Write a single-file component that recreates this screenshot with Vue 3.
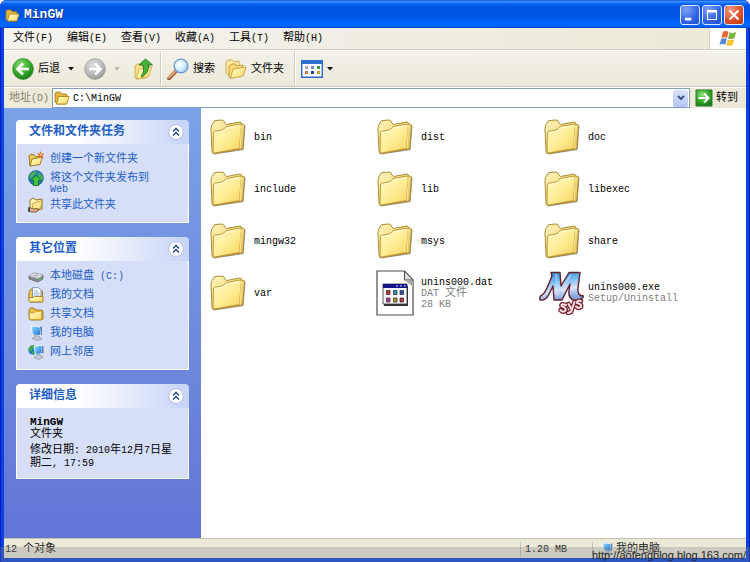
<script setup>
import { h } from 'vue'

// Wraps half-width runs so that they sit at about half the advance of a Chinese character.
const Mixed = (props) =>
  h('span', { class: 'mixed' }, props.t.split(/([\x20-\x7e]+)/).filter(Boolean).map((part) =>
    /^[\x20-\x7e]+$/.test(part) ? h('span', { class: 'lat' }, part) : part))
Mixed.props = ['t']

const menus = ['文件(F)', '编辑(E)', '查看(V)', '收藏(A)', '工具(T)', '帮助(H)']
const tasks = [
  { icon: 'new', lines: ['创建一个新文件夹'] },
  { icon: 'web', lines: ['将这个文件夹发布到', 'Web'] },
  { icon: 'share', lines: ['共享此文件夹'] },
]
const places = [
  { icon: 'disk', lines: ['本地磁盘 (C:)'] },
  { icon: 'docs', lines: ['我的文档'] },
  { icon: 'folder', lines: ['共享文档'] },
  { icon: 'pc', lines: ['我的电脑'] },
  { icon: 'net', lines: ['网上邻居'] },
]
const panels = [
  { title: '文件和文件夹任务', links: tasks },
  { title: '其它位置', links: places },
  { title: '详细信息', links: null },
]
const files = [
  ...['bin', 'dist', 'doc', 'include', 'lib', 'libexec', 'mingw32', 'msys', 'share', 'var']
    .map((name) => ({ name, icon: 'bigfolder', info: [] })),
  { name: 'unins000.dat', icon: 'dat', info: ['DAT 文件', '28 KB'] },
  { name: 'unins000.exe', icon: 'exe', info: ['Setup/Uninstall'] },
]
</script>

<template>
  <div class="window">
    <svg class="defs" width="0" height="0" aria-hidden="true">
      <defs>
        <linearGradient id="gFront" x1="0" y1="0" x2="1" y2="1">
          <stop offset="0" stop-color="#fffac4" /><stop offset=".5" stop-color="#ffee98" /><stop offset="1" stop-color="#f8d25c" />
        </linearGradient>
        <linearGradient id="gBack" x1="0" y1="0" x2="1" y2="1">
          <stop offset="0" stop-color="#fff6bd" /><stop offset="1" stop-color="#e6bd4a" />
        </linearGradient>
        <radialGradient id="gGreen" cx=".4" cy=".3" r=".7">
          <stop offset="0" stop-color="#8fe07c" /><stop offset=".6" stop-color="#35ab2c" /><stop offset="1" stop-color="#1b7d1a" />
        </radialGradient>
        <radialGradient id="gGrey" cx=".4" cy=".3" r=".7">
          <stop offset="0" stop-color="#dedede" /><stop offset=".7" stop-color="#b5b5b3" /><stop offset="1" stop-color="#999" />
        </radialGradient>
        <radialGradient id="gLens" cx=".4" cy=".4" r=".6">
          <stop offset="0" stop-color="#fff" /><stop offset=".6" stop-color="#d3edfd" /><stop offset="1" stop-color="#9dcdf5" />
        </radialGradient>
        <linearGradient id="gScreen" x1="0" y1="0" x2="1" y2="1">
          <stop offset="0" stop-color="#a8e4ff" /><stop offset=".5" stop-color="#4fa8f0" /><stop offset="1" stop-color="#1e6cd0" />
        </linearGradient>
        <linearGradient id="gM" x1="0" y1="0" x2=".25" y2="1">
          <stop offset="0" stop-color="#2f7fd2" /><stop offset=".35" stop-color="#6cb6ef" /><stop offset=".7" stop-color="#dfe6fa" /><stop offset="1" stop-color="#7fa3dc" />
        </linearGradient>
        <symbol id="i-folder" viewBox="0 0 16 16">
          <path d="M1 5Q1 2 3 2H6L8 4H13Q15 4 15 6V13L13 14H3Q1 14 1 12Z" fill="#e9bd45" stroke="#9a7417" stroke-width=".9" />
          <path d="M1.5 7H6L8 5.500H13.500V13.500H3Q1.500 13.500 1.500 12Z" fill="url(#gFront)" stroke="#bd9226" stroke-width=".6" />
        </symbol>
        <symbol id="i-open" viewBox="0 0 16 14">
          <path d="M1 3Q1 1 3 1H6L8 3H12Q13 3 13 5V6L12 13H3L1 11Z" fill="#e6b63e" stroke="#a87d18" stroke-width=".9" />
          <path d="M4.500 5.500H15.200L12.700 13H2.500Z" fill="url(#gFront)" stroke="#ad8119" stroke-width=".9" />
        </symbol>
        <symbol id="i-new" viewBox="0 0 16 16">
          <path d="M1 5L3 3L6 4L8 6L12 5L12 13L2 15Z" fill="#f3cb5d" stroke="#8e6a18" stroke-width=".9" />
          <path d="M4 8L14.500 6L12 13.500L2 15Z" fill="url(#gFront)" stroke="#9e741a" stroke-width=".9" />
          <path d="M12.500 0L13.500 2.500L16 2.500L14.500 4.500L15.500 7L12.500 5.500L10 7L10.800 4.400L9 2.500L11.500 2.500Z" fill="#e9652d" />
          <circle cx="12.700" cy="3.600" r="1.200" fill="#ffd176" />
        </symbol>
        <symbol id="i-web" viewBox="0 0 16 16">
          <circle cx="8" cy="8" r="7.300" fill="#277ac5" stroke="#165586" stroke-width=".8" />
          <path d="M2 5Q4 1 8 1.500L9 3L6 5L4 8L1.500 8ZM11 2L15 7L14 11L11 9L10 6Z" fill="#48b153" />
          <path d="M8 5L13 10.500H10.500V15.500H5.500V10.500H3Z" fill="#3fc43d" stroke="#126a20" stroke-width=".8" />
        </symbol>
        <symbol id="i-share" viewBox="0 0 16 16">
          <path d="M2 3L5 1L8 3L14 2V12L4 14L2 12Z" fill="url(#gFront)" stroke="#896615" stroke-width=".9" />
          <path d="M5 6L14.500 4L12.500 11L4 13Z" fill="#ffe691" stroke="#ac8223" stroke-width=".6" />
          <path d="M0 11H3L5 12L9 11.500L11 13L8 15H3L0 14Z" fill="#e7b288" stroke="#62442f" stroke-width=".8" />
          <path d="M0 10.500H2V15H0Z" fill="#454a54" />
        </symbol>
        <symbol id="i-disk" viewBox="0 0 16 16">
          <path d="M1 8L6 5L15 7V11L10 14L1 11Z" fill="#85888d" stroke="#5e6064" stroke-width=".7" />
          <path d="M1 8L6 5L15 7L10 10.500Z" fill="#dedfe2" />
          <path d="M4 7.700L8 6.500L11 7.500L9 8.800Z" fill="#afb2b8" />
          <path d="M11.500 11.700L14 10.200" stroke="#39d33b" stroke-width="1.300" />
        </symbol>
        <symbol id="i-docs" viewBox="0 0 16 16">
          <path d="M1 5L3 2H6L8 4L14.500 4.500V15H2L1 14Z" fill="#f1c85a" stroke="#99731c" stroke-width=".9" />
          <path d="M4.500 .700H10.500L13 3V12H4.500Z" fill="#fff" stroke="#617ba7" stroke-width=".8" />
          <path d="M6 4H10M6 6H11.500M6 8H11.500" stroke="#659bd2" stroke-width=".8" />
          <path d="M1 10.500H5L6.500 9.500H15V14.500L14 15H2L1 14Z" fill="url(#gFront)" stroke="#99731c" stroke-width=".8" />
        </symbol>
        <symbol id="i-pc" viewBox="0 0 16 16">
          <path d="M3 .700L12 2L13 10.500L4.500 10Z" fill="url(#gScreen)" stroke="#eff5fb" stroke-width="1" />
          <path d="M12 2L14 1.500V10L13 10.500Z" fill="#66809f" />
          <path d="M6.500 10.500L11 11V12L14 14L9 15.500L4 13.500L7 12Z" fill="#c4cad3" stroke="#7b8796" stroke-width=".6" />
        </symbol>
        <symbol id="i-net" viewBox="0 0 16 16">
          <circle cx="5" cy="6" r="4.700" fill="#287bc8" />
          <path d="M1 4Q3 1 6 1.500L7 4L4 5L3 8L.500 7ZM4 8L7 7V10L5 10.500Z" fill="#42aa4b" />
          <path d="M6 2L14 1.500V9.500L7.500 10.500Z" fill="url(#gScreen)" stroke="#edf3fb" stroke-width=".9" />
          <path d="M14 1.500L15.500 2.500V9L14 9.500Z" fill="#637c9c" />
          <path d="M9 10.500L12 10V11.500L15 13L11 15.500L6 13.500L9 12Z" fill="#c7cdd7" stroke="#788492" stroke-width=".6" />
        </symbol>
        <symbol id="i-bigfolder" viewBox="0 0 36 36">
          <path d="M34.500 6L35.500 7L33.500 31L4 35.500L3 34.500L32.500 30Z" fill="#77756a" opacity=".8" />
          <path d="M1 10Q1 6 3 4Q3.500 1.500 6 1.500L12 1Q14 1 15 4L16.500 5.500L30 3Q31.500 3 31.500 5L34 5.500Q34.700 6 34.500 8L32.700 30L3.500 34.500Q2 34.500 2 32Z" fill="url(#gBack)" stroke="#a98b35" stroke-width="1" />
          <path d="M3.500 13Q4 12 6 12L12 11Q14 10.500 15 8.500Q16 7.500 18 7.200L30 5Q31.500 5 31.300 7L29.500 29.500L4.500 34Q3 34 3 32Z" fill="url(#gFront)" stroke="#b9912e" stroke-width=".9" />
          <path d="M4.500 14L13 12Q15.500 11 16.500 9L30 6.500" fill="none" stroke="#fffde2" stroke-width=".9" />
          <path d="M31.500 6.500L30 29.500" fill="none" stroke="#fff1a3" stroke-width=".9" />
        </symbol>
        <symbol id="i-dat" viewBox="0 0 38 46">
          <path d="M1 1H28.500L37 10V45H1Z" fill="#fff" stroke="#4c4c4c" stroke-width="1.200" />
          <path d="M28.500 1V10H37Z" fill="#dcdcdc" stroke="#4c4c4c" stroke-width="1" />
          <path d="M29 10.500L37 11V17Z" fill="#aaa" />
          <path d="M8 16H32V36H8Z" fill="#333" />
          <path d="M7 14H31V34H7Z" fill="#f5f5f8" stroke="#333" stroke-width=".8" />
          <path d="M7 14H31V18H7Z" fill="#101389" />
          <path d="M20 16H22M24 16H26M28 16H30" stroke="#8f98cc" stroke-width="1.400" />
          <g stroke="#222" stroke-width=".7">
            <path d="M10.500 20.500H14V24.500H10.500Z" fill="#cc2e2e" /><path d="M17.500 20.500H21V24.500H17.500Z" fill="#2597b6" /><path d="M24 20.500H27.500V24.500H24Z" fill="#3154bd" />
            <path d="M10.500 28H14V32H10.500Z" fill="#c935a1" /><path d="M17.500 28H21V32H17.500Z" fill="#b49c25" /><path d="M24 28H27.500V32H24Z" fill="#c83434" />
          </g>
        </symbol>
        <symbol id="i-exe" viewBox="0 0 46 44">
          <path d="M12 1.500H21L22 15L30 1.500H41L39 17Q38 25 44.500 25Q43 30 36 29.500Q29 28 30 20L31 13L23 29H15L14 15L10 23Q7 30 1 29Q0 25 3 24Q6 22 8 17L13 5Z" fill="url(#gM)" stroke="#64202b" stroke-width="1.400" stroke-linejoin="round" />
          <path d="M17 3L19 23L32 4" fill="none" stroke="#bfdffa" stroke-width="1.400" opacity=".7" />
          <g fill="none" stroke-linecap="round" stroke-linejoin="round">
            <g stroke="#77202d" stroke-width="4.600">
              <path d="M27 34Q22 32 22.500 35Q28 37 26.500 39.500Q24 42 21.500 39" /><path d="M29.500 33L32 37.500M35.500 31L32 41L29 42" /><path d="M42 30Q37.500 29 38 32Q43 33 42 36Q39.500 38 37 35.500" />
            </g>
            <g stroke="#fce2e6" stroke-width="2">
              <path d="M27 34Q22 32 22.500 35Q28 37 26.500 39.500Q24 42 21.500 39" /><path d="M29.500 33L32 37.500M35.500 31L32 41L29 42" /><path d="M42 30Q37.500 29 38 32Q43 33 42 36Q39.500 38 37 35.500" />
            </g>
          </g>
        </symbol>
      </defs>
    </svg>

    <header class="titlebar">
      <svg class="ic-title" viewBox="0 0 16 14"><use href="#i-open" /></svg>
      <h1>MinGW</h1>
      <div class="winbtns">
        <button type="button" aria-label="最小化"><svg viewBox="0 0 20 20"><path d="M4.500 13H11.500V16H4.500Z" fill="#fff" /></svg></button>
        <button type="button" aria-label="最大化"><svg viewBox="0 0 20 20"><path d="M5 5.500H15V15H5Z" fill="none" stroke="#fff" stroke-width="1.200" /><path d="M4.400 4.500H15.600V7.300H4.400Z" fill="#fff" /></svg></button>
        <button type="button" class="close" aria-label="关闭"><svg viewBox="0 0 20 20"><path d="M5 5L15 15M15 5L5 15" stroke="#fff" stroke-width="2.200" /></svg></button>
      </div>
    </header>

    <div class="client">
      <nav class="menubar">
        <button v-for="m in menus" :key="m" type="button"><Mixed :t="m" /></button>
        <div class="flag">
          <svg viewBox="0 0 20 18">
            <path d="M4 2Q7 0 10 2L8.500 8.500Q5.500 7 2.500 8.500Z" fill="#e8643a" />
            <path d="M11 2.500Q14 4 18 2L16.500 8.500Q13 10.500 9.500 9Z" fill="#7eb844" />
            <path d="M2.200 9.500Q5 8 8.200 9.500L6.700 15.500Q4 14 .500 15.500Z" fill="#5487d6" />
            <path d="M9.200 10Q12.500 11.500 16.200 9.700L14.500 16Q11 18 7.700 16.200Z" fill="#f6c638" />
          </svg>
        </div>
      </nav>

      <div class="toolbar">
        <button type="button" class="tool back">
          <svg class="ic22" viewBox="0 0 22 22"><circle cx="11" cy="11" r="10.400" fill="url(#gGreen)" stroke="#3d8f38" stroke-width=".8" /><path d="M11 5.500L5.500 11L11 16.500M6 11H17" fill="none" stroke="#fff" stroke-width="2.600" /></svg>
          <span>后退</span>
        </button>
        <button type="button" class="drop" aria-label="后退列表"><svg viewBox="0 0 6 4"><path d="M0 0H6L3 3.500Z" fill="#111" /></svg></button>
        <button type="button" class="tool forward" aria-label="前进">
          <svg class="ic22" viewBox="0 0 22 22"><circle cx="11" cy="11" r="10.400" fill="url(#gGrey)" stroke="#a5a5a3" stroke-width=".8" /><path d="M11 5.500L16.500 11L11 16.500M16 11H5" fill="none" stroke="#fff" stroke-width="2.600" /></svg>
        </button>
        <button type="button" class="drop" aria-label="前进列表"><svg viewBox="0 0 6 4"><path d="M0 0H6L3 3.500Z" fill="#bbb9ae" /></svg></button>
        <button type="button" class="tool up" aria-label="向上">
          <svg class="ic22" viewBox="0 0 22 22">
            <path d="M3 8L5 6H8L10 8L17 7V17L14 20L4 21L3 19Z" fill="#f9e28c" stroke="#c9a444" stroke-width=".9" />
            <path d="M7 11L20 9L16 19L4 21Z" fill="url(#gFront)" stroke="#cba448" stroke-width=".8" />
            <path d="M9 18Q13 14 11 7H7L13.500 1L20.500 7H16.500Q17.500 14 10 19Z" fill="#45b53a" stroke="#20741d" stroke-width=".9" />
          </svg>
        </button>
        <i class="sep"></i>
        <button type="button" class="tool">
          <svg class="ic22" viewBox="0 0 22 22">
            <path d="M9 13L2 20.500" stroke="#8b5839" stroke-width="3.600" stroke-linecap="round" /><path d="M8.500 13L2 19.500" stroke="#e9a26a" stroke-width="2" stroke-linecap="round" />
            <circle cx="14" cy="8" r="6.900" fill="url(#gLens)" stroke="#7299c9" stroke-width="1.400" />
          </svg>
          <span>搜索</span>
        </button>
        <button type="button" class="tool folders">
          <svg class="ic22" viewBox="0 0 22 22">
            <path d="M1 4L3 2H7L9 4L14 3V14L3 17L1 15Z" fill="#fdeaa2" stroke="#cba44c" stroke-width=".9" />
            <path d="M4 8L7 6H10L12 8L18 7V17L6 20L4 19Z" fill="#f8d877" stroke="#c0973a" stroke-width=".9" />
            <path d="M8 11L21 9L18 18L5.500 20.500Z" fill="url(#gFront)" stroke="#c59d3d" stroke-width=".9" />
          </svg>
          <span>文件夹</span>
        </button>
        <i class="sep"></i>
        <button type="button" class="tool views" aria-label="查看">
          <svg class="ic22" viewBox="0 0 22 18">
            <path d="M.700 .700H21.300V17.300H.700Z" fill="#fafcff" stroke="#2a69c2" stroke-width="1.400" /><path d="M0 0H22V4H0Z" fill="#2d70d0" />
            <path d="M4 6H7V9H4Z" fill="#bba2aa" /><path d="M4 11H7V14H4Z" fill="#d0743f" /><path d="M10 6H13V9H10Z" fill="#6c8ed0" /><path d="M10 11H13V14H10Z" fill="#24489b" />
            <path d="M16 6H19V9H16Z" fill="#3f9a35" /><path d="M16 11H19V14H16Z" fill="#c79b2d" />
          </svg>
          <svg class="arrow" viewBox="0 0 6 4"><path d="M0 0H6L3 3.500Z" fill="#111" /></svg>
        </button>
      </div>

      <form class="address" @submit.prevent>
        <label for="addr"><Mixed t="地址(D)" /></label>
        <div class="combo">
          <svg class="ic-addr" viewBox="0 0 16 14"><use href="#i-open" /></svg>
          <input id="addr" type="text" value="C:\MinGW" />
          <button type="button" aria-label="展开地址"><svg viewBox="0 0 8 6"><path d="M1 1L4 4L7 1" fill="none" stroke="#3e5688" stroke-width="2" /></svg></button>
        </div>
        <button type="submit" class="go">
          <svg viewBox="0 0 18 18"><path d="M1 1H17V17H1Z" fill="url(#gGreen)" stroke="#28812a" stroke-width="1" /><path d="M9 4.500L13.500 9L9 13.500M13 9H3.500" fill="none" stroke="#fff" stroke-width="2" /></svg>
          <span>转到</span>
        </button>
      </form>

      <div class="main">
        <aside class="side">
          <section v-for="p in panels" :key="p.title" class="panel">
            <div class="phead">
              <h2>{{ p.title }}</h2>
              <button type="button" aria-label="折叠">
                <svg viewBox="0 0 16 16"><circle cx="8" cy="8" r="7.400" fill="#fff" stroke="#b4bddd" stroke-width="1" /><path d="M5 7.500L8 4.500L11 7.500M5 11.500L8 8.500L11 11.500" fill="none" stroke="#22478f" stroke-width="1.500" /></svg>
              </button>
            </div>
            <ul v-if="p.links" class="pbody links">
              <li v-for="l in p.links" :key="l.icon">
                <a href="#">
                  <svg class="ic16" viewBox="0 0 16 16"><use :href="'#i-' + l.icon" /></svg>
                  <span class="lines"><span v-for="t in l.lines" :key="t"><Mixed :t="t" /></span></span>
                </a>
              </li>
            </ul>
            <div v-else class="pbody details">
              <p><strong>MinGW</strong><span>文件夹</span></p>
              <p><span><Mixed t="修改日期: 2010年12月7日星" /></span><span><Mixed t="期二, 17:59" /></span></p>
            </div>
          </section>
        </aside>

        <main class="files">
          <button v-for="f in files" :key="f.name" type="button" class="file">
            <span class="slot"><svg :class="f.icon"><use :href="'#i-' + f.icon" /></svg></span>
            <span class="ftext">
              <span class="fname">{{ f.name }}</span>
              <span v-for="t in f.info" :key="t" class="finfo"><Mixed :t="t" /></span>
            </span>
          </button>
        </main>
      </div>

      <footer class="status">
        <span class="count"><Mixed t="12 个对象" /></span>
        <span class="size"><Mixed t="1.20 MB" /></span>
        <span class="zone"><svg viewBox="0 0 16 16"><use href="#i-pc" /></svg>我的电脑</span>
      </footer>
    </div>
    <div class="mark">http://aofengblog.blog.163.com/</div>
  </div>
</template>

<style>
body { margin: 0; background: #fff; }
.mixed { white-space: pre; }
.lat { font-family: "Liberation Mono", monospace; font-size: 10px; }
</style>

<style scoped>
.window {
  position: relative; box-sizing: border-box; min-height: 100vh; display: flex; flex-direction: column;
  padding: 0 4px 4px; background: #0a44dc; border-radius: 7px 7px 0 0; overflow: hidden;
  font-family: "Liberation Mono", "Noto Sans CJK SC", monospace; font-size: 11px; line-height: 12px; color: #000;
  box-shadow: inset 1px 0 #0019cf, inset -1px 0 #0019a0;
}
.defs { position: absolute; }
button { font: inherit; color: inherit; background: none; border: 0; padding: 0; margin: 0; text-align: left; }
svg { display: block; flex: none; }

.titlebar {
  display: flex; align-items: center; height: 28px; margin: 0 -4px; padding: 2px 6px 0 5px; box-sizing: border-box;
  background: linear-gradient(#0a50cc 0, #3a90ff 5%, #0b62f0 14%, #0053e1 25%, #0055e8 60%, #0365fb 80%, #0464fc 92%, #0048d0);
}
.ic-title { width: 15px; height: 13px; }
h1 { flex: 1; margin: 0 0 0 4px; font-size: 13px; line-height: 16px; color: #fff; text-shadow: 1px 1px #06308c; }
.winbtns { display: flex; gap: 2px; }
.winbtns button {
  width: 20px; height: 20px; box-sizing: border-box; border: 1px solid #dfe9ff; border-radius: 3px;
  background: radial-gradient(circle at 30% 20%, #7fa2f8, #2f62e6 60%, #2050c8);
}
.winbtns .close { background: radial-gradient(circle at 30% 20%, #f3977c, #dd4c27 60%, #b93513); }

.client { flex: 1; display: flex; flex-direction: column; background: #ece9d8; }
.menubar {
  display: flex; align-items: center; gap: 14px; height: 22px; box-sizing: border-box; padding-left: 9px;
  background: linear-gradient(90deg, #f4f3ee, #ece9d8); border-bottom: 1px solid #d3cfbe;
}
.flag { margin-left: auto; width: 37px; height: 21px; box-sizing: border-box; background: #fff; border-left: 1px solid #d3cfbe; display: flex; align-items: center; justify-content: center; }
.flag svg { width: 19px; height: 17px; }

.toolbar {
  display: flex; align-items: center; height: 37px; box-sizing: border-box; padding-left: 8px;
  background: linear-gradient(#f3f2ea, #ece9d8); border-top: 1px solid #fff; border-bottom: 1px solid #cbc7b6;
}
.tool { display: flex; align-items: center; gap: 4px; }
.ic22 { width: 22px; height: 22px; }
.drop { padding: 4px 8px; }
.drop svg, .arrow { width: 6px; height: 4px; }
.forward { margin-left: 2px; }
.up { margin-left: 4px; }
.sep { width: 1px; height: 33px; background: #d0ccba; box-shadow: 1px 0 #fff; margin: 0 6px; }
.folders { margin-left: 10px; }
.folders + .sep { margin-left: 10px; }
.views .ic22 { height: 18px; }

.address { display: flex; align-items: center; height: 21px; box-sizing: border-box; padding: 0 8px 0 5px; border-top: 1px solid #fff; }
.address label { width: 43px; color: #85836f; }
.combo { flex: 1; display: flex; align-items: center; height: 20px; box-sizing: border-box; border: 1px solid #7f9db9; background: #fff; padding: 0 1px; }
.ic-addr { width: 16px; height: 14px; }
.combo input { flex: 1; min-width: 0; border: 0; outline: 0; padding: 0 0 0 3px; height: 16px; background: none; font: inherit; font-size: 10px; color: #000; }
.combo button { width: 15px; height: 17px; background: linear-gradient(#dbe4fd, #b4c6f6); border-radius: 2px; display: flex; align-items: center; justify-content: center; }
.combo button svg { width: 8px; height: 6px; }
.go { display: flex; align-items: center; gap: 3px; margin-left: 5px; }
.go svg { width: 18px; height: 18px; }

.main { flex: 1; display: flex; background: #fff; }
.side {
  flex: none; width: 197px; box-sizing: border-box; padding: 12px 12px 14px; display: flex; flex-direction: column; gap: 14px;
  background: linear-gradient(#7ba2e7, #6375d6);
}
.phead {
  display: flex; align-items: center; justify-content: space-between; height: 24px; box-sizing: border-box; padding: 0 5px 0 13px;
  border-radius: 4px 4px 0 0; background: linear-gradient(90deg, #fff 35%, #c7d4f7);
}
h2 { margin: 0; font-size: 12px; line-height: 16px; color: #215dc6; font-weight: 700; }
.phead button svg { width: 16px; height: 16px; }
.pbody { margin: 0; border: 1px solid #fff; border-top: 0; background: #d6dff7; list-style: none; }
.links { padding: 7px 8px 9px 11px; display: flex; flex-direction: column; gap: 3px; }
.links a { display: flex; gap: 6px; color: #215dc6; text-decoration: none; }
.ic16 { width: 16px; height: 16px; }
.lines { display: flex; flex-direction: column; padding-top: 2px; }
.lines > span { height: 11px; }
.details { padding: 8px 8px 8px 13px; }
.details p { margin: 0 0 4px; }
.details p:last-child { margin: 0; }
.details strong, .details span { display: block; }
.details :deep(.mixed), .details :deep(.lat) { display: inline; }

.files { flex: 1; display: grid; grid-template-columns: repeat(auto-fill, 167px); grid-auto-rows: 52px; align-content: start; padding: 3px 0 0 4px; }
.file { display: flex; align-items: center; gap: 3px; white-space: nowrap; }
.slot { width: 46px; display: flex; justify-content: center; }
.bigfolder { width: 36px; height: 36px; }
.dat { width: 38px; height: 46px; }
.exe { width: 46px; height: 44px; }
.ftext { display: flex; flex-direction: column; line-height: 11px; }
.fname { font-size: 10px; }
.finfo { height: 11px; color: #808080; }

.status { display: flex; align-items: center; height: 20px; box-sizing: border-box; border-top: 1px solid #c4c0ae; color: #222; }
.status > span { height: 14px; line-height: 14px; }
.count { flex: 1; padding-left: 1px; }
.size { width: 72px; box-sizing: border-box; padding-left: 4px; border-left: 1px solid #c5c2b2; }
.zone { width: 154px; box-sizing: border-box; padding-left: 7px; border-left: 1px solid #c5c2b2; display: flex; gap: 2px; }
.zone svg { width: 14px; height: 14px; }

.mark {
  position: absolute; left: 0; right: 0; bottom: 0; height: 15px; box-sizing: border-box; padding-right: 4px;
  background: rgba(128, 128, 128, .3); color: #222; text-align: right; white-space: nowrap;
  font-family: "Liberation Sans", sans-serif; font-size: 11px; line-height: 16px;
}
</style>
